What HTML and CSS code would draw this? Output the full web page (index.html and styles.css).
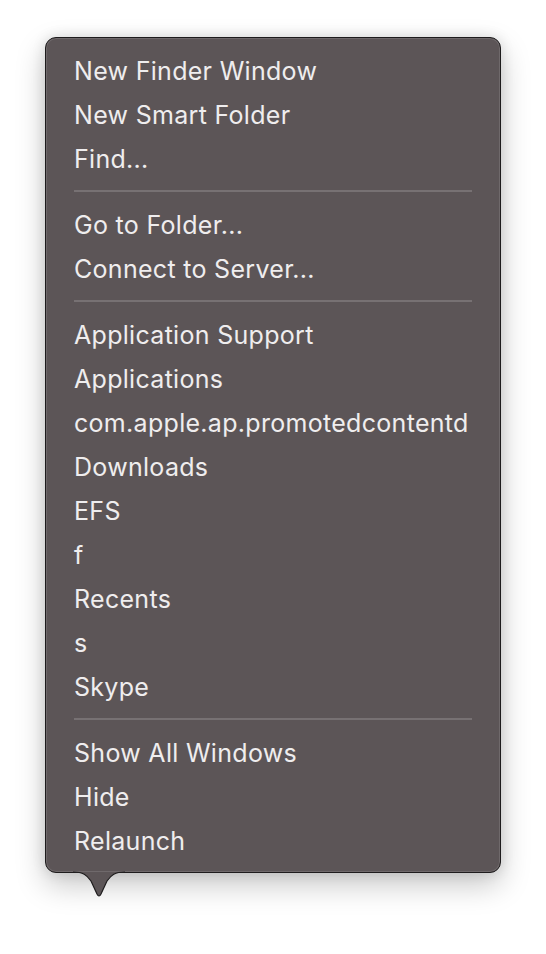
FILE: index.html
```html
<!DOCTYPE html>
<html>
<head>
  <title>Dock Menu</title>
  <link rel="stylesheet" href="styles.css">
</head>
<body>
  <div class="menu">
    <div class="item">New Finder Window</div>
    <div class="item">New Smart Folder</div>
    <div class="item">Find...</div>
    <div class="separator"></div>
    <div class="item">Go to Folder...</div>
    <div class="item">Connect to Server...</div>
    <div class="separator"></div>
    <div class="item">Application Support</div>
    <div class="item">Applications</div>
    <div class="item">com.apple.ap.promotedcontentd</div>
    <div class="item">Downloads</div>
    <div class="item">EFS</div>
    <div class="item">f</div>
    <div class="item">Recents</div>
    <div class="item">s</div>
    <div class="item">Skype</div>
    <div class="separator"></div>
    <div class="item">Show All Windows</div>
    <div class="item">Hide</div>
    <div class="item">Relaunch</div>

    <svg class="arrow" width="52" height="28" viewBox="0 0 52 28">
      <path d="M0 1 C10 1 14 4 18 10 L24 23 Q26 27 28 23 L34 10 C38 4 42 1 52 1 Z" fill="#5c5557"/>
      <path d="M0 1 C10 1 14 4 18 10 L24 23 Q26 27 28 23 L34 10 C38 4 42 1 52 1" fill="none" stroke="#1e1c1d" stroke-width="1.2"/>
    </svg>
  </div>
</body>
</html>
```

FILE: styles.css
```css
/* Page */
html, body {
  height: 100%;
}

body {
  margin: 0;
  padding: 0;
  min-height: 954px;
  background-color: #ffffff;
  font-family: Inter, "Noto Sans", sans-serif;
}

/* Menu box */
.menu {
  position: relative;
  width: 454px;
  margin: 0 0 0 45px;
  top: 37px;
  padding: 11px 0 9px;
  background-color: #5c5557;
  border: 1px solid #1e1c1d;
  border-radius: 11px;
  box-shadow: inset 0 0 0 1px rgba(255, 255, 255, 0.12),
              0 12px 30px rgba(0, 0, 0, 0.22),
              0 0 14px rgba(0, 0, 0, 0.12);
}

.item {
  height: 44px;
  line-height: 44px;
  padding-left: 28px;
  color: #efedee;
  font-size: 25px;
  letter-spacing: 0.3px;
  white-space: nowrap;
}

.separator {
  height: 2px;
  margin: 9px 28px 11px;
  background-color: #777173;
}

/* Pointer under the menu */
.arrow {
  position: absolute;
  left: 27px;
  bottom: -27px;
  z-index: 2;
}
```
